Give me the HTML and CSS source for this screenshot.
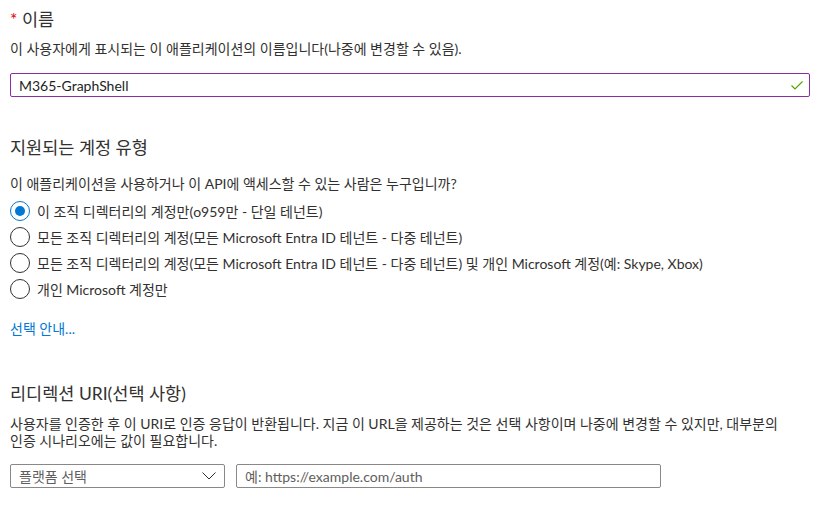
FILE: index.html
```html
<!DOCTYPE html>
<html lang="ko">
<head>
    <meta charset="UTF-8">
    <meta name="viewport" content="width=device-width, initial-scale=1.0">
    <title>애플리케이션 등록</title>
    <link rel="stylesheet" href="styles.css">
</head>
<body>
    <div class="form">
        <div class="title"><span class="req">*</span> 이름</div>
        <p class="desc">이 사용자에게 표시되는 이 애플리케이션의 이름입니다(나중에 변경할 수 있음).</p>
        <div class="name-box">
            <span class="name-value">M365-GraphShell</span>
            <svg class="check" width="12" height="9" viewBox="0 0 12 9">
                <path d="M0.5 4.5 L4 8 L11.5 0.5" fill="none" stroke="#57a300" stroke-width="1.2"/>
            </svg>
        </div>

        <h2 class="section">지원되는 계정 유형</h2>
        <p class="question">이 애플리케이션을 사용하거나 이 API에 액세스할 수 있는 사람은 누구입니까?</p>
        <div class="radios">
            <label class="radio checked"><span class="dot"></span>이 조직 디렉터리의 계정만(o959만 - 단일 테넌트)</label>
            <label class="radio"><span class="dot"></span>모든 조직 디렉터리의 계정(모든 Microsoft Entra ID 테넌트 - 다중 테넌트)</label>
            <label class="radio"><span class="dot"></span>모든 조직 디렉터리의 계정(모든 Microsoft Entra ID 테넌트 - 다중 테넌트) 및 개인 Microsoft 계정(예: Skype, Xbox)</label>
            <label class="radio"><span class="dot"></span>개인 Microsoft 계정만</label>
        </div>
        <a class="help" href="#">선택 안내...</a>

        <h2 class="section redirect">리디렉션 URI(선택 사항)</h2>
        <p class="para">사용자를 인증한 후 이 URI로 인증 응답이 반환됩니다. 지금 이 URL을 제공하는 것은 선택 사항이며 나중에 변경할 수 있지만, 대부분의 인증 시나리오에는 값이 필요합니다.</p>
        <div class="uri-row">
            <div class="platform">
                <span>플랫폼 선택</span>
                <svg width="14" height="8" viewBox="0 0 14 8">
                    <path d="M0.5 0.5 L7 7 L13.5 0.5" fill="none" stroke="#323130" stroke-width="1"/>
                </svg>
            </div>
            <div class="uri-input">예: https://example.com/auth</div>
        </div>
    </div>
</body>
</html>
```

FILE: styles.css
```css
body {
    margin: 0;
    font-family: "Lato", "Noto Sans CJK KR", sans-serif;
    color: #323130;
    background: #fff;
}
.form {
    width: 800px;
    padding-left: 10px;
    font-size: 14px;
    word-break: keep-all;
}
.title {
    margin-top: 9px;
    font-size: 17.5px;
    line-height: 22px;
}
.req {
    color: #e50000;
}
.desc, .question {
    margin: 9px 0 0;
    line-height: 18px;
}
.name-box {
    margin-top: 15px;
    height: 22px;
    border: 1px solid #8e2ba6;
    border-radius: 2px;
    display: flex;
    align-items: center;
    justify-content: space-between;
    padding: 0 6px 0 8px;
}
.name-value {
    color: #201f1e;
}
.section {
    margin: 40px 0 0;
    font-size: 17.5px;
    font-weight: normal;
    line-height: 22px;
}
.question {
    margin-top: 16px;
}
.radios {
    margin-top: 5px;
}
.radio {
    display: flex;
    align-items: center;
    height: 26px;
}
.dot {
    width: 18px;
    height: 18px;
    border: 1px solid #323130;
    border-radius: 50%;
    margin-right: 7px;
    position: relative;
    flex: none;
}
.radio.checked .dot {
    border-color: #0078d4;
}
.radio.checked .dot::after {
    content: "";
    position: absolute;
    left: 4px;
    top: 4px;
    width: 10px;
    height: 10px;
    border-radius: 50%;
    background: #0078d4;
}
.help {
    display: block;
    margin-top: 18px;
    line-height: 18px;
    color: #0078d4;
    text-decoration: none;
}
.redirect {
    margin-top: 45px;
}
.para {
    margin: 10px 0 0;
    max-width: 790px;
    line-height: 17px;
}
.uri-row {
    margin-top: 15px;
    display: flex;
    gap: 11px;
}
.platform, .uri-input {
    height: 22px;
    border: 1px solid #8a8886;
    border-radius: 2px;
    display: flex;
    align-items: center;
    padding: 0 8px;
}
.platform {
    width: 197px;
    justify-content: space-between;
    color: #605e5c;
}
.uri-input {
    width: 407px;
    color: #605e5c;
}
```
